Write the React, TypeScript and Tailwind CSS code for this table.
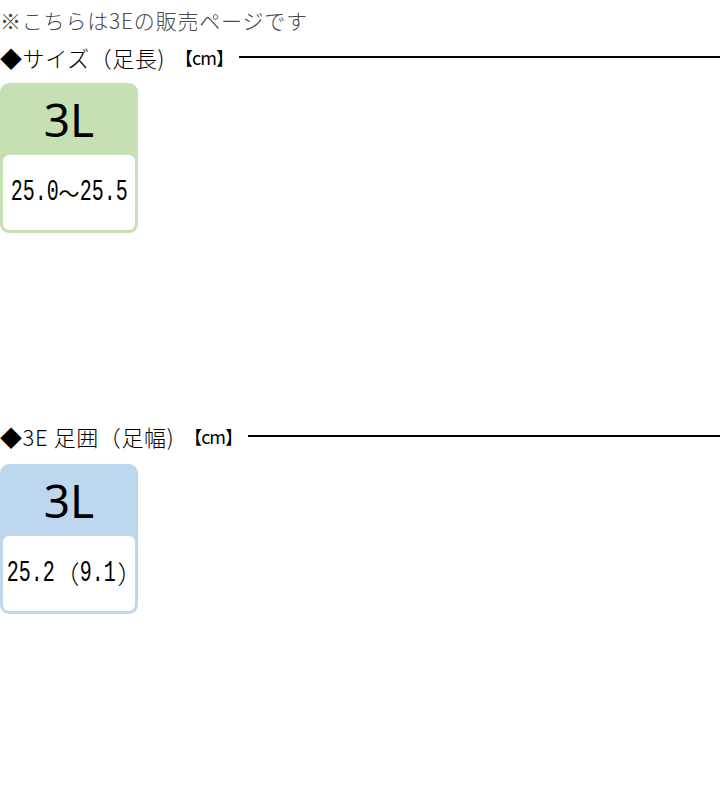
import React from "react";

const jp = { fontFamily: '"Noto Sans CJK JP", "Noto Sans", sans-serif' };
const cjk = { fontFamily: '"Noto Sans CJK JP", sans-serif' };

function Heading({ children }: { children: React.ReactNode }) {
  return (
    <div className="flex h-[34px] items-center text-black">
      <span className="whitespace-nowrap text-[22px] font-light leading-none tracking-[0.6px]">{children}</span>
      <span className="ml-[10px] whitespace-nowrap text-[18px] leading-none tracking-[-1px]">【cm】</span>
      <div className="ml-[6px] h-[2px] flex-1 bg-black" />
    </div>
  );
}

function Cell({ ch }: { ch: string }) {
  if (ch === "〜") {
    return (
      <span className="flex h-[30px] w-[21px] shrink-0 items-center justify-center text-[21px] leading-none text-black" style={cjk}>
        {ch}
      </span>
    );
  }
  if (ch === "（") {
    return (
      <span className="flex h-[30px] w-[25px] shrink-0 items-center justify-end text-[25px] font-light leading-none text-black" style={cjk}>
        {ch}
      </span>
    );
  }
  if (ch === "）") {
    return (
      <span className="flex h-[30px] w-[16px] shrink-0 items-center justify-start pl-[2px] text-[25px] font-light leading-none text-black" style={cjk}>
        {ch}
      </span>
    );
  }
  return (
    <span className="flex h-[30px] w-[12px] shrink-0 items-center justify-center">
      <span
        className="-mx-[3px] inline-block scale-x-[0.69] scale-y-[1.04] text-[29px] leading-none text-black"
        style={{ fontFamily: '"Liberation Mono", monospace' }}
      >
        {ch}
      </span>
    </span>
  );
}

function Value({ text }: { text: string }) {
  return (
    <div className="flex items-center">
      {Array.from(text).map((ch, i) => (
        <Cell key={i} ch={ch} />
      ))}
    </div>
  );
}

function SizeCard({ bg, label, value }: { bg: string; label: string; value: string }) {
  return (
    <div className={`flex h-[150px] w-[138px] flex-col rounded-[9px] px-[3px] pb-[3px] ${bg}`}>
      <div className="flex h-[72px] items-center justify-center">
        <span className="text-[46px] leading-none text-black" style={{ fontFamily: '"Noto Sans", sans-serif' }}>
          {label}
        </span>
      </div>
      <div className="flex flex-1 items-center justify-center rounded-[6px] bg-white">
        <Value text={value} />
      </div>
    </div>
  );
}

export default function App() {
  return (
    <div className="h-[792px] w-[720px] overflow-hidden bg-white" style={jp}>
      <div className="flex h-[40px] items-center whitespace-nowrap text-[21px] font-light leading-none tracking-[0.8px] text-[#4a4a4a]">
        ※こちらは3Eの販売ページです
      </div>
      <Heading>◆サイズ（足長)</Heading>
      <div className="mt-[9px]">
        <SizeCard bg="bg-[#c6e0b4]" label="3L" value="25.0〜25.5" />
      </div>
      <div className="mt-[186px]">
        <Heading>◆3E 足囲（足幅)</Heading>
      </div>
      <div className="mt-[11px]">
        <SizeCard bg="bg-[#bdd7ee]" label="3L" value="25.2（9.1）" />
      </div>
    </div>
  );
}
